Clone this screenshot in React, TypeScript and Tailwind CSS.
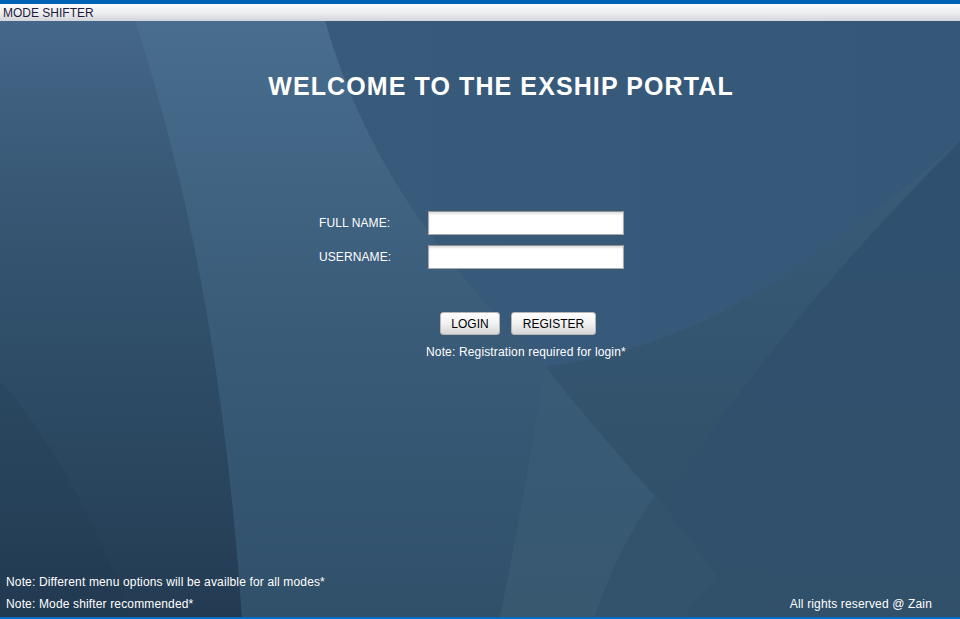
import React from "react";

function Backdrop() {
  return (
    <svg
      className="absolute inset-0 h-full w-full"
      viewBox="0 0 960 596"
      preserveAspectRatio="none"
      aria-hidden="true"
    >
      <defs>
        <linearGradient id="base" x1="0" y1="0" x2="0" y2="1">
          <stop offset="0" stopColor="#3e6081" />
          <stop offset="0.55" stopColor="#34556f" />
          <stop offset="1" stopColor="#2f4c66" />
        </linearGradient>
        <linearGradient id="leftDark" x1="0" y1="0" x2="0" y2="1">
          <stop offset="0" stopColor="#46688a" stopOpacity="0.9" />
          <stop offset="0.45" stopColor="#2f4d68" stopOpacity="0.6" />
          <stop offset="1" stopColor="#233b52" stopOpacity="1" />
        </linearGradient>
        <linearGradient id="band" x1="0" y1="0" x2="0" y2="1">
          <stop offset="0" stopColor="#486d8e" />
          <stop offset="0.5" stopColor="#3a5c79" />
          <stop offset="1" stopColor="#30506a" />
        </linearGradient>
        <linearGradient id="wedge" x1="0" y1="0" x2="0" y2="1">
          <stop offset="0" stopColor="#395b77" />
          <stop offset="1" stopColor="#385870" />
        </linearGradient>
        <linearGradient id="rightDark" x1="0" y1="0" x2="0" y2="1">
          <stop offset="0" stopColor="#2f5070" />
          <stop offset="1" stopColor="#31506a" />
        </linearGradient>
        <linearGradient id="topRight" x1="0" y1="0" x2="1" y2="0">
          <stop offset="0" stopColor="#395b7b" />
          <stop offset="1" stopColor="#365878" />
        </linearGradient>
      </defs>
      <rect width="960" height="596" fill="url(#base)" />
      {/* upper right area */}
      <path d="M325 0 L960 0 L960 120 C800 260 680 330 545 345 C420 220 360 120 325 0 Z" fill="url(#topRight)" />
      {/* left region */}
      <path d="M0 0 L135 0 C190 170 225 350 242 596 L0 596 Z" fill="url(#leftDark)" />
      {/* bottom-left subtle darker wedge */}
      <path d="M0 360 C55 420 105 520 130 596 L0 596 Z" fill="#1d3448" opacity="0.15" />
      {/* lighter band between curves */}
      <path
        d="M135 0 L325 0 C360 120 420 220 545 345 C530 440 515 520 500 596 L242 596 C225 350 190 170 135 0 Z"
        fill="url(#band)"
      />
      {/* lighter wedge lower middle */}
      <path
        d="M545 345 C580 390 615 430 655 475 C630 510 610 550 595 596 L500 596 C515 520 530 440 545 345 Z"
        fill="url(#wedge)"
      />
      {/* right darker region */}
      <path d="M960 120 C820 260 690 420 595 596 L960 596 Z" fill="url(#rightDark)" />
      {/* faint continuation of wedge edge inside dark region */}
      <path d="M655 475 C680 505 700 530 720 560 C700 570 690 585 685 596 L595 596 C610 550 630 510 655 475 Z" fill="#35556e" opacity="0.6" />
    </svg>
  );
}

export default function App() {
  const font = { fontFamily: '"Liberation Sans", Arial, sans-serif' };
  return (
    <div className="flex h-[619px] w-[960px] flex-col overflow-hidden" style={font}>
      <div className="h-[4px] bg-[#0064b4]" />
      <div className="flex h-[17px] items-center bg-gradient-to-b from-[#fbfbfc] via-[#eeeff2] to-[#d3d5da] pl-[3px] text-[12px] leading-[14px] text-[#1c1c3c]">
        MODE SHIFTER
      </div>
      <div className="relative flex flex-1 flex-col">
        <Backdrop />
        <div className="relative flex flex-1 flex-col text-white">
          <h1 className="mt-[51px] pl-[42px] text-center text-[25px] font-bold leading-[28px] tracking-[1.1px]">
            WELCOME TO THE EXSHIP PORTAL
          </h1>
          <div className="ml-[319px] mt-[111px] grid grid-cols-[109px_196px] gap-y-[10px] text-[12px] tracking-[0.1px]">
            <label className="flex items-center">FULL NAME:</label>
            <input className="h-[24px] border border-[#a9a9a9] border-t-[#8f8f8f] bg-white shadow-[inset_0_2px_2px_rgba(0,0,0,0.12)] outline-none" />
            <label className="flex items-center">USERNAME:</label>
            <input className="h-[24px] border border-[#a9a9a9] border-t-[#8f8f8f] bg-white shadow-[inset_0_2px_2px_rgba(0,0,0,0.12)] outline-none" />
          </div>
          <div className="ml-[440px] mt-[43px] flex gap-[11px]">
            <button className="h-[23px] w-[60px] rounded-[3px] border border-[#b5b5b5] bg-gradient-to-b from-[#ffffff] via-[#f1f1f1] to-[#d6d6d6] text-[12px] leading-none text-black">
              LOGIN
            </button>
            <button className="h-[23px] w-[85px] rounded-[3px] border border-[#b5b5b5] bg-gradient-to-b from-[#ffffff] via-[#f1f1f1] to-[#d6d6d6] text-[12px] leading-none text-black">
              REGISTER
            </button>
          </div>
          <p className="ml-[426px] mt-[10px] text-[12px] leading-[14px] tracking-[0.15px]">
            Note: Registration required for login*
          </p>
          <div className="flex-1" />
          <div className="flex flex-col gap-[8px] pb-[6px] pl-[6px] pr-[28px] text-[12px] leading-[14px] tracking-[0.15px]">
            <p>Note: Different menu options will be availble for all modes*</p>
            <div className="flex justify-between">
              <p>Note: Mode shifter recommended*</p>
              <p>All rights reserved @ Zain</p>
            </div>
          </div>
        </div>
      </div>
      <div className="h-[2px] bg-[#0a6cc0]" />
    </div>
  );
}
